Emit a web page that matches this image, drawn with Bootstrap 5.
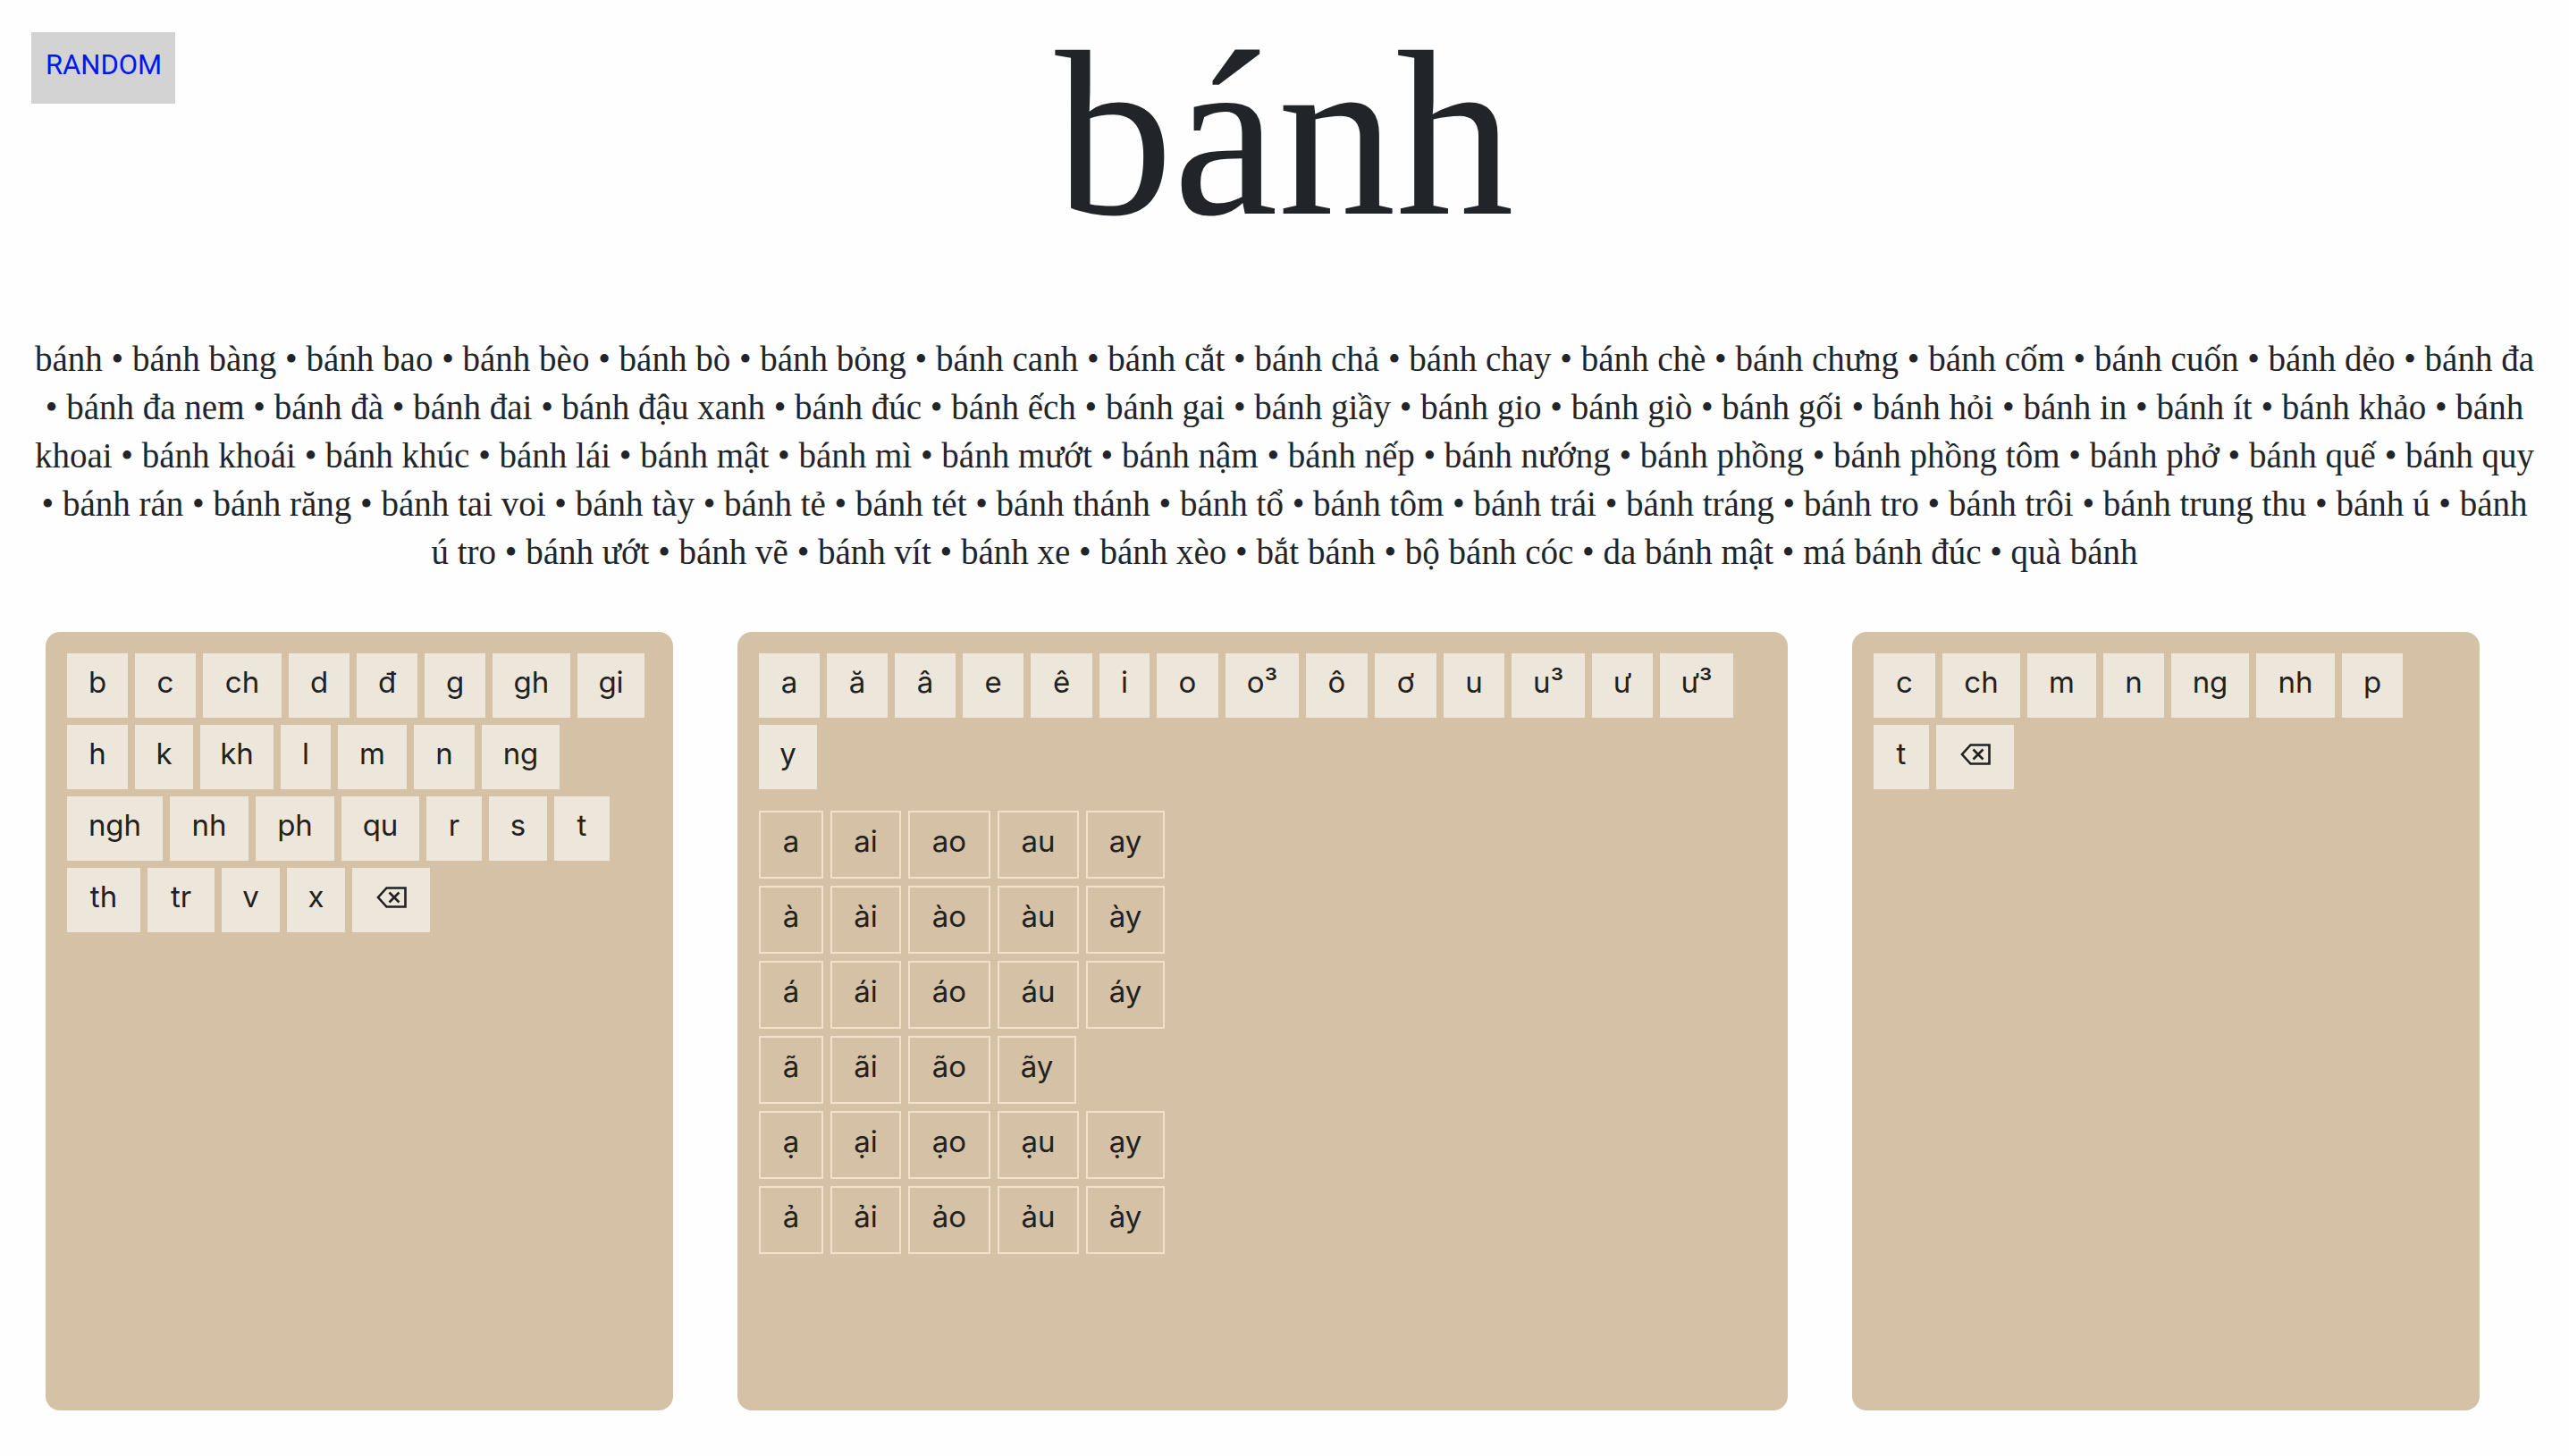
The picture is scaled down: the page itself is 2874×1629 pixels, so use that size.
<!DOCTYPE html>
<html lang="vi">
<head>
<meta charset="utf-8">
<meta name="viewport" content="width=device-width, initial-scale=1">
<title>bánh</title>
<link href="https://cdn.jsdelivr.net/npm/bootstrap@5.3.0/dist/css/bootstrap.min.css" rel="stylesheet">
<style>
body { background: #fefefe; color: #212529; font-family: Inter, "Noto Sans", sans-serif; font-size: 32px; line-height: 48px; }
.random-link { position: absolute; top: 36px; left: 35px; padding: 13px 15px 19px 16px; background: #d3d3d3; color: #0018f0; font-family: Roboto, sans-serif; font-size: 31px; }
.syllable { font-family: "Liberation Serif", serif; font-size: 264px; line-height: 300px; }
.word-list { font-family: "Liberation Serif", serif; font-size: 39px; line-height: 54px; margin-top: 75px; }
.word-list span { display: block; white-space: nowrap; }
.panels { display: grid; grid-template-columns: 702fr 1175fr 702fr; gap: 72px; margin: 62px 100px 51px 51px; }
.panel { background: #d5c1a5; border-radius: 16px; padding: 24px; min-height: 871px; }
.keys { gap: 8px; }
.key { height: 72px; padding: 8px 0 16px; border: 0; background: #ede7db; color: #212121; font-size: 33px; line-height: 48px; text-align: center; width: 68px; }
.key svg { display: block; margin: 13px auto; }
.rhyme { height: 76px; border: 2px solid #f0e0cc; background: transparent; width: 72px; }
.k56 { width: 56px; } .k62 { width: 62px; } .k65 { width: 65px; } .k69 { width: 69px; } .k75 { width: 75px; } .k77 { width: 77px; }
.k82 { width: 82px; } .k87 { width: 87px; } .k107 { width: 107px; }
.k79 { width: 79px; } .k92 { width: 92px; } .k91 { width: 91px; } .k88 { width: 88px; }
</style>
<script src="https://cdn.jsdelivr.net/npm/bootstrap@5.3.0/dist/js/bootstrap.bundle.min.js"></script>
</head>
<body>
<svg width="0" height="0" class="d-none" aria-hidden="true"><symbol id="erase" viewBox="0 0 34 24"><path d="M11.500 1.500H32.500V22.500H11.500L2 12ZM14.500 6.500L25.500 17.500M25.500 6.500L14.500 17.500" fill="none" stroke="currentColor" stroke-width="2.600"/></symbol></svg>
<a class="random-link text-decoration-none" href="#">RANDOM</a>
<main>
<h1 class="syllable text-center fw-normal m-0">bánh</h1>
<p class="word-list text-center mb-0">
<span>bánh • bánh bàng • bánh bao • bánh bèo • bánh bò • bánh bỏng • bánh canh • bánh cắt • bánh chả • bánh chay • bánh chè • bánh chưng • bánh cốm • bánh cuốn • bánh dẻo • bánh đa</span>
<span>• bánh đa nem • bánh đà • bánh đai • bánh đậu xanh • bánh đúc • bánh ếch • bánh gai • bánh giầy • bánh gio • bánh giò • bánh gối • bánh hỏi • bánh in • bánh ít • bánh khảo • bánh</span>
<span>khoai • bánh khoái • bánh khúc • bánh lái • bánh mật • bánh mì • bánh mướt • bánh nậm • bánh nếp • bánh nướng • bánh phồng • bánh phồng tôm • bánh phở • bánh quế • bánh quy</span>
<span>• bánh rán • bánh răng • bánh tai voi • bánh tày • bánh tẻ • bánh tét • bánh thánh • bánh tổ • bánh tôm • bánh trái • bánh tráng • bánh tro • bánh trôi • bánh trung thu • bánh ú • bánh</span>
<span>ú tro • bánh ướt • bánh vẽ • bánh vít • bánh xe • bánh xèo • bắt bánh • bộ bánh cóc • da bánh mật • má bánh đúc • quà bánh</span>
</p>
<div class="panels">
<section class="panel" aria-label="Âm đầu">
<div class="keys d-flex flex-wrap">
<button class="key">b</button><button class="key">c</button><button class="key k88">ch</button><button class="key">d</button><button class="key">đ</button><button class="key">g</button><button class="key k87">gh</button><button class="key k75">gi</button>
<button class="key">h</button><button class="key k65">k</button><button class="key k82">kh</button><button class="key k56">l</button><button class="key k77">m</button><button class="key">n</button><button class="key k87">ng</button>
<button class="key k107">ngh</button><button class="key k88">nh</button><button class="key k88">ph</button><button class="key k87">qu</button><button class="key k62">r</button><button class="key k65">s</button><button class="key k62">t</button>
<button class="key k82">th</button><button class="key k75">tr</button><button class="key k65">v</button><button class="key k65">x</button><button class="key k87" aria-label="Xóa"><svg width="34" height="24"><use href="#erase"/></svg></button>
</div>
</section>
<section class="panel" aria-label="Vần">
<div class="keys d-flex flex-wrap">
<button class="key">a</button><button class="key">ă</button><button class="key">â</button><button class="key">e</button><button class="key k69">ê</button><button class="key k56">i</button><button class="key k69">o</button><button class="key k82">o³</button><button class="key k69">ô</button><button class="key k69">ơ</button><button class="key">u</button><button class="key k82">u³</button><button class="key">ư</button><button class="key k82">ư³</button>
<button class="key k65">y</button>
</div>
<div class="keys d-flex flex-column mt-4">
<div class="keys d-flex"><button class="key rhyme">a</button><button class="key rhyme k79">ai</button><button class="key rhyme k92">ao</button><button class="key rhyme k91">au</button><button class="key rhyme k88">ay</button></div>
<div class="keys d-flex"><button class="key rhyme">à</button><button class="key rhyme k79">ài</button><button class="key rhyme k92">ào</button><button class="key rhyme k91">àu</button><button class="key rhyme k88">ày</button></div>
<div class="keys d-flex"><button class="key rhyme">á</button><button class="key rhyme k79">ái</button><button class="key rhyme k92">áo</button><button class="key rhyme k91">áu</button><button class="key rhyme k88">áy</button></div>
<div class="keys d-flex"><button class="key rhyme">ã</button><button class="key rhyme k79">ãi</button><button class="key rhyme k92">ão</button><button class="key rhyme k88">ãy</button></div>
<div class="keys d-flex"><button class="key rhyme">ạ</button><button class="key rhyme k79">ại</button><button class="key rhyme k92">ạo</button><button class="key rhyme k91">ạu</button><button class="key rhyme k88">ạy</button></div>
<div class="keys d-flex"><button class="key rhyme">ả</button><button class="key rhyme k79">ải</button><button class="key rhyme k92">ảo</button><button class="key rhyme k91">ảu</button><button class="key rhyme k88">ảy</button></div>
</div>
</section>
<section class="panel" aria-label="Âm cuối">
<div class="keys d-flex flex-wrap">
<button class="key k69">c</button><button class="key k87">ch</button><button class="key k77">m</button><button class="key">n</button><button class="key k87">ng</button><button class="key k88">nh</button><button class="key">p</button>
<button class="key k62">t</button><button class="key k87" aria-label="Xóa"><svg width="34" height="24"><use href="#erase"/></svg></button>
</div>
</section>
</div>
</main>
</body>
</html>
